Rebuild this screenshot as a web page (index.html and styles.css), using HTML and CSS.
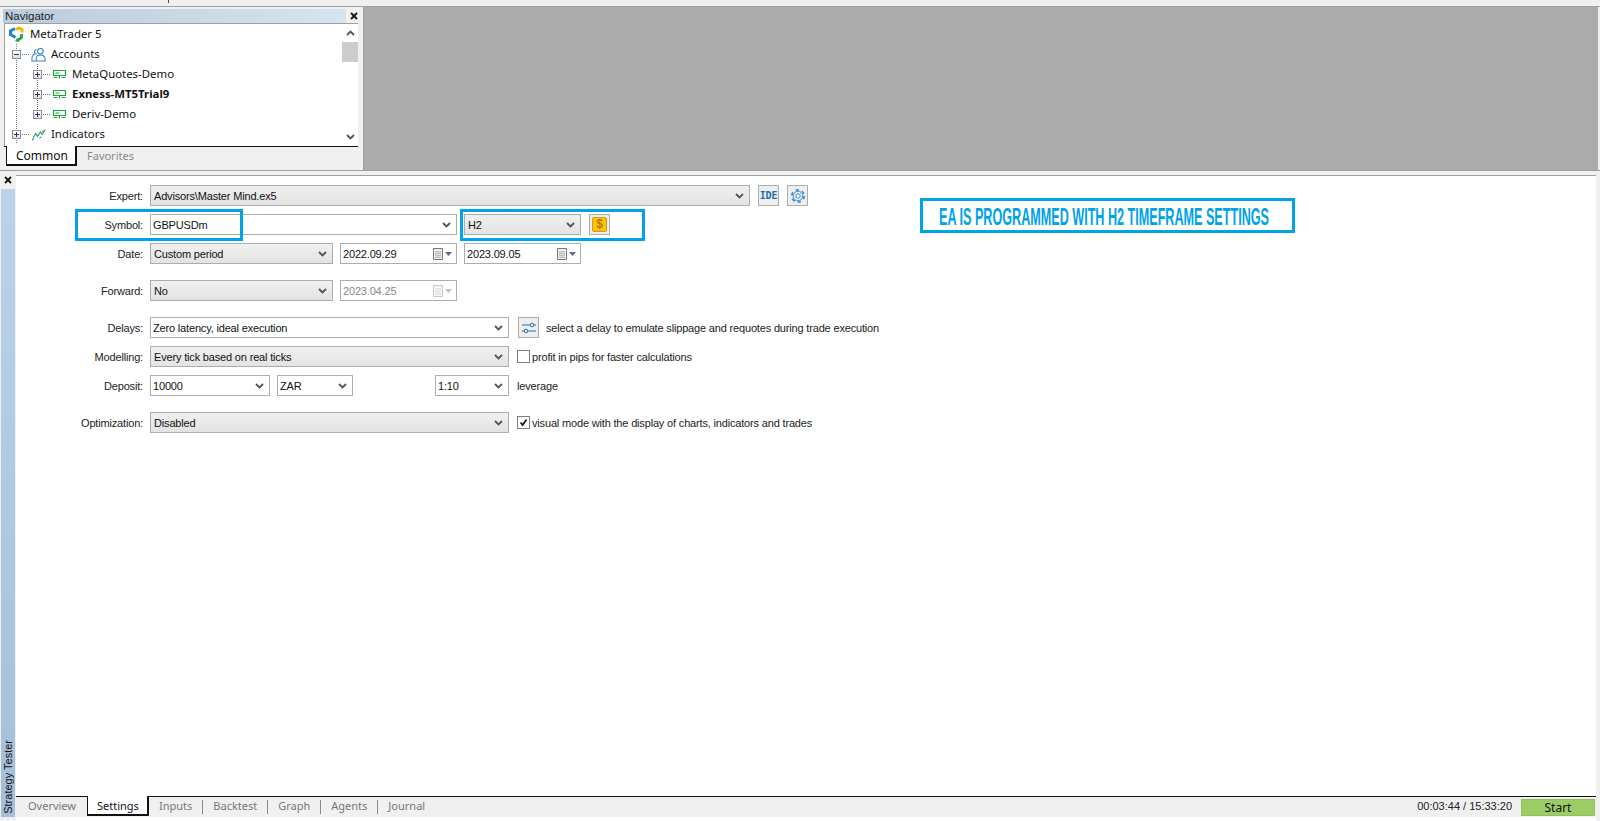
FILE: index.html
```html
<!DOCTYPE html>
<html lang="en">
<head>
<meta charset="utf-8">
<title>Strategy Tester</title>
<link rel="stylesheet" href="styles.css">
</head>
<body>
<header class="topbar"><span class="top-mark"></span></header>
<section class="upper">
  <aside class="navigator">
    <div class="nav-head">
      <div class="nav-title">Navigator</div>
      <svg class="close" viewBox="0 0 8 8"><path d="M1 1l6 6M7 1L1 7" /></svg>
    </div>
    <div class="nav-tree">
      <svg class="tree-lines" width="60" height="122"><path d="M16.500 20V120M37.500 40V91M22 30.500h7M43 50.500h7M43 70.500h7M43 90.500h7M22 110.500h7" /></svg>
      <div class="tree-body">
        <div class="node node-root">
          <svg class="logo" viewBox="0 0 16 16"><g fill="none" stroke-width="3"><path d="M7 2.500L2.500 5v3.500l5 3" stroke="#1b86d8"/><path d="M8 3.500l3-1.500 3 1.500v3" stroke="#f5b800"/><path d="M13.500 8v3.500l-4 3L8 13.500" stroke="#2da84a"/></g></svg>
          <span class="node-text">MetaTrader 5</span>
        </div>
        <div class="node node-l1">
          <span class="exp"></span>
          <svg class="ico" viewBox="0 0 16 16"><g fill="none" stroke="#2a7fc9" stroke-width="1.100"><circle cx="10" cy="4.500" r="3"/><path d="M5.500 15v-2.500c0-2.500 2-4 4.500-4s5 1.500 5 4V15z"/><path d="M5.600 2.600a2.500 2.500 0 0 0-.6 4.600C2.500 8 1 9.500 1 12v3h4"/></g></svg>
          <span class="node-text">Accounts</span>
        </div>
        <div class="node node-l2">
          <span class="exp plus"></span>
          <svg class="ico" viewBox="0 0 15 15"><path class="srv" d="M1.500 3.500h12v5h-12zM3.500 6h4M1.500 10.500h4M9.500 10.500h4M7.500 8.500v3"/></svg>
          <span class="node-text">MetaQuotes-Demo</span>
        </div>
        <div class="node node-l2 node-bold">
          <span class="exp plus"></span>
          <svg class="ico" viewBox="0 0 15 15"><path class="srv" d="M1.500 3.500h12v5h-12zM3.500 6h4M1.500 10.500h4M9.500 10.500h4M7.500 8.500v3"/></svg>
          <span class="node-text">Exness-MT5Trial9</span>
        </div>
        <div class="node node-l2">
          <span class="exp plus"></span>
          <svg class="ico" viewBox="0 0 15 15"><path class="srv" d="M1.500 3.500h12v5h-12zM3.500 6h4M1.500 10.500h4M9.500 10.500h4M7.500 8.500v3"/></svg>
          <span class="node-text">Deriv-Demo</span>
        </div>
        <div class="node node-l1">
          <span class="exp plus"></span>
          <svg class="ico" viewBox="0 0 16 16"><path d="M2 12l3-5 2 3 3-5 2 3 3-5" fill="none" stroke="#2fa24f" stroke-width="1.200"/><path d="M1 14l2-1.500M9 12l2-1.500M12 5l2-1" fill="none" stroke="#2a7fc9" stroke-width="1.200"/></svg>
          <span class="node-text">Indicators</span>
        </div>
      </div>
      <div class="scrollbar">
        <svg class="sb-arrow" viewBox="0 0 9 6"><path d="M1 5l3.500-3.500L8 5"/></svg>
        <div class="sb-track"><div class="sb-thumb"></div></div>
        <svg class="sb-arrow" viewBox="0 0 9 6"><path d="M1 1l3.500 3.500L8 1"/></svg>
      </div>
    </div>
    <div class="nav-tabs">
      <div class="nav-tab active">Common</div>
      <div class="nav-tab">Favorites</div>
    </div>
  </aside>
  <div class="workspace"></div>
</section>

<section class="tester">
  <div class="side">
    <svg class="close" viewBox="0 0 8 8"><path d="M1 1l6 6M7 1L1 7" /></svg>
    <div class="side-strip"><span>Strategy Tester</span></div>
  </div>
  <div class="main">
    <form class="form">
      <div class="row">
        <label class="lbl">Expert:</label>
        <div class="ctl sel w-expert"><span>Advisors\Master Mind.ex5</span><svg class="chev" viewBox="0 0 9 6"><path d="M1 1l3.500 3.500L8 1"/></svg></div>
        <div class="btn ide">IDE</div>
        <div class="btn"><svg class="btn-ico" viewBox="0 0 16 16"><circle cx="8" cy="8" r="6.200" fill="none" stroke="#3d8fd0" stroke-width="1.800" stroke-dasharray="3.300 3.200"/><circle cx="8" cy="8" r="4.800" fill="#dcecf8" stroke="#3d8fd0"/><circle cx="8" cy="8" r="2.200" fill="#fff" stroke="#3d8fd0"/></svg></div>
      </div>
      <div class="row">
        <label class="lbl">Symbol:</label>
        <div class="ctl inp w-symbol"><span>GBPUSDm</span><svg class="chev" viewBox="0 0 9 6"><path d="M1 1l3.500 3.500L8 1"/></svg></div>
        <div class="ctl sel w-tf"><span>H2</span><svg class="chev" viewBox="0 0 9 6"><path d="M1 1l3.500 3.500L8 1"/></svg></div>
        <div class="btn btn-tf"><span class="dollar">$</span></div>
      </div>
      <div class="row">
        <label class="lbl">Date:</label>
        <div class="ctl sel w-date"><span>Custom period</span><svg class="chev" viewBox="0 0 9 6"><path d="M1 1l3.500 3.500L8 1"/></svg></div>
        <div class="ctl inp w-cal"><span>2022.09.29</span><svg class="cal" viewBox="0 0 20 12"><path class="cal-b" d="M1.500 .5h9v11h-9z"/><path class="cal-g" d="M3 3.500h6M3 5.500h6M3 7.500h6M3 9.500h6M4 3v7M6 3v7M8 3v7"/><path class="cal-a" d="M13 4h7l-3.500 4z"/></svg></div>
        <div class="ctl inp w-tf"><span>2023.09.05</span><svg class="cal" viewBox="0 0 20 12"><path class="cal-b" d="M1.500 .5h9v11h-9z"/><path class="cal-g" d="M3 3.500h6M3 5.500h6M3 7.500h6M3 9.500h6M4 3v7M6 3v7M8 3v7"/><path class="cal-a" d="M13 4h7l-3.500 4z"/></svg></div>
      </div>
      <div class="row row-far">
        <label class="lbl">Forward:</label>
        <div class="ctl sel w-date"><span>No</span><svg class="chev" viewBox="0 0 9 6"><path d="M1 1l3.500 3.500L8 1"/></svg></div>
        <div class="ctl inp w-tf disabled"><span>2023.04.25</span><svg class="cal" viewBox="0 0 20 12"><path class="cal-b" d="M1.500 .5h9v11h-9z"/><path class="cal-g" d="M3 3.500h6M3 5.500h6M3 7.500h6M3 9.500h6M4 3v7M6 3v7M8 3v7"/><path class="cal-a" d="M13 4h7l-3.500 4z"/></svg></div>
      </div>
      <div class="row row-far">
        <label class="lbl">Delays:</label>
        <div class="ctl inp w-wide"><span>Zero latency, ideal execution</span><svg class="chev" viewBox="0 0 9 6"><path d="M1 1l3.500 3.500L8 1"/></svg></div>
        <div class="btn btn-delay"><svg class="btn-ico" viewBox="0 0 16 16"><path d="M1 5h8M13 5h2M1 11h2M7 11h8" fill="none" stroke="#2a6ea6"/><circle cx="11" cy="5" r="1.800" fill="none" stroke="#2a6ea6"/><circle cx="5" cy="11" r="1.800" fill="none" stroke="#2a6ea6"/></svg></div>
        <span class="note">select a delay to emulate slippage and requotes during trade execution</span>
      </div>
      <div class="row">
        <label class="lbl">Modelling:</label>
        <div class="ctl sel w-wide"><span>Every tick based on real ticks</span><svg class="chev" viewBox="0 0 9 6"><path d="M1 1l3.500 3.500L8 1"/></svg></div>
        <span class="check"></span>
        <span class="note">profit in pips for faster calculations</span>
      </div>
      <div class="row">
        <label class="lbl">Deposit:</label>
        <div class="ctl inp w-dep"><span>10000</span><svg class="chev" viewBox="0 0 9 6"><path d="M1 1l3.500 3.500L8 1"/></svg></div>
        <div class="ctl inp w-cur"><span>ZAR</span><svg class="chev" viewBox="0 0 9 6"><path d="M1 1l3.500 3.500L8 1"/></svg></div>
        <div class="ctl inp w-lev"><span>1:10</span><svg class="chev" viewBox="0 0 9 6"><path d="M1 1l3.500 3.500L8 1"/></svg></div>
        <span class="note note-lev">leverage</span>
      </div>
      <div class="row row-far">
        <label class="lbl">Optimization:</label>
        <div class="ctl sel w-wide"><span>Disabled</span><svg class="chev" viewBox="0 0 9 6"><path d="M1 1l3.500 3.500L8 1"/></svg></div>
        <span class="check"><svg viewBox="0 0 13 13"><path d="M3 6.500l2.500 3L10 3" fill="none" stroke="#111" stroke-width="2"/></svg></span>
        <span class="note">visual mode with the display of charts, indicators and trades</span>
      </div>
    </form>
    <div class="hl hl-symbol"></div>
    <div class="hl hl-tf"></div>
    <div class="hl hl-note"><span>EA IS PROGRAMMED WITH H2 TIMEFRAME SETTINGS</span></div>
    <footer class="tabbar">
      <div class="tab">Overview</div>
      <div class="tab active">Settings</div>
      <div class="tab sep">Inputs</div>
      <div class="tab sep">Backtest</div>
      <div class="tab sep">Graph</div>
      <div class="tab sep">Agents</div>
      <div class="tab">Journal</div>
      <div class="time">00:03:44 / 15:33:20</div>
      <div class="start">Start</div>
    </footer>
  </div>
</section>
</body>
</html>
```
FILE: styles.css
```css
* { box-sizing: border-box; }
html, body { height: 100%; }
body {
  margin: 0;
  width: 1600px;
  height: 821px;
  overflow: hidden;
  background: #f0f0f0;
  color: #111;
  font: 12px "Liberation Sans", Arial, sans-serif;
  display: flex;
  flex-direction: column;
}
.topbar { height: 7px; background: #f0f0f0; border-bottom: 1px solid #a0a0a0; padding-left: 168px; }
.top-mark { display: block; width: 1px; height: 3px; background: #7a3040; }
.upper { display: flex; height: 164px; border-bottom: 1px solid #a0a0a0; padding-right: 2px; }
.navigator { width: 364px; display: flex; flex-direction: column; background: #f0f0f0; padding: 2px 5px 0 3px; border-right: 1px solid #a0a0a0; }
.nav-head { display: flex; align-items: center; height: 14px; }
.nav-title { width: 343px; height: 14px; line-height: 14px; padding-left: 2px; font-size: 11.500px; color: #222; background: linear-gradient(90deg, #b9cbdc, #d6e4f2); }
.close { width: 8px; height: 8px; margin-left: 4px; fill: none; stroke: #111; stroke-width: 1.800; flex: none; }
.nav-tree { position: relative; display: flex; height: 123px; margin-left: 1px; background: #fff; border-top: 1px solid #a0a0a0; border-left: 1px solid #a0a0a0; }
.tree-lines { position: absolute; left: -5px; top: 0; fill: none; stroke: #777; stroke-dasharray: 1 1; }
.tree-body { position: relative; flex: 1; }
.node { display: flex; align-items: center; height: 20px; font-family: "Noto Sans", sans-serif; font-size: 11.400px; color: #111; }
.node-text { margin-bottom: 2px; }
.node-root { padding-left: 3px; gap: 6px; }
.logo { width: 16px; height: 16px; flex: none; }
.node-l1 { padding-left: 7px; }
.node-l2 { padding-left: 28px; }
.node-bold { font-weight: 700; }
.exp {
  width: 9px;
  height: 9px;
  flex: none;
  border: 1px solid #8a8f98;
  background: linear-gradient(#26306a, #26306a) center / 5px 1px no-repeat, linear-gradient(#fff, #dde0e6);
}
.exp.plus {
  background: linear-gradient(#26306a, #26306a) center / 5px 1px no-repeat, linear-gradient(#26306a, #26306a) center / 1px 5px no-repeat, linear-gradient(#fff, #dde0e6);
}
.ico { width: 15px; height: 15px; flex: none; }
.node-l1 .exp, .node-l2 .exp { margin-right: 10px; }
.node-l1 .ico, .node-l2 .ico { margin-right: 5px; }
.srv { fill: none; stroke: #17a83b; stroke-width: 1.200; }
.scrollbar { width: 16px; display: flex; flex-direction: column; align-items: center; background: #fff; }
.sb-arrow { width: 9px; height: 6px; margin: 6px 0 6px; fill: none; stroke: #555; stroke-width: 1.800; flex: none; }
.sb-track { flex: 1; width: 100%; }
.sb-thumb { height: 20px; background: #cdcdcd; }
.nav-tabs { display: flex; height: 21px; margin-left: 1px; border-top: 1px solid #111; padding-left: 2px; }
.nav-tab { height: 20px; line-height: 18px; padding: 0 10px; font-family: "Noto Sans", sans-serif; font-size: 11px; color: #888; }
.nav-tab.active { font-size: 12px; background: #fff; color: #111; width: 71px; border-left: 1px solid #111; border-right: 2px solid #111; border-bottom: 2px solid #111; margin-top: -1px; padding: 1px 0 0 9px; }
.workspace { flex: 1; background: #ababab; }
.tester { flex: 1; display: flex; min-height: 0; }
.side { width: 16px; flex: none; display: flex; flex-direction: column; align-items: center; padding-top: 5px; }
.side .close { margin: 0; }
.side-strip { flex: 1; width: 14px; margin-top: 5px; margin-bottom: 4px; background: linear-gradient(#bcd2ea, #a5bedb); display: flex; align-items: flex-end; justify-content: center; }
.side-strip span { writing-mode: vertical-rl; transform: rotate(180deg); font-size: 11px; line-height: 14px; color: #111; padding-top: 3px; }
.main { position: relative; flex: 1; display: flex; flex-direction: column; background: #fff; border-top: 1px solid #a0a0a0; margin: 4px 4px 0 0; }
.form { flex: 1; padding-top: 9px; display: flex; flex-direction: column; gap: 8px; letter-spacing: -.17px; }
.row { display: flex; align-items: center; height: 21px; gap: 7px; }
.row-far { margin-top: 8px; }
.lbl { width: 127px; text-align: right; color: #222; font-size: 11px; }
.ctl { height: 21px; border: 1px solid #adadad; display: flex; align-items: center; justify-content: space-between; padding: 0 3px; font-size: 11px; color: #111; flex: none; }
.sel { background: linear-gradient(#f0f0f0, #e3e3e3); }
.inp { background: #fff; padding-left: 2px; }
.chev { width: 9px; height: 6px; fill: none; stroke: #555; stroke-width: 1.800; flex: none; margin-right: 2px; }
.w-expert { width: 600px; }
.w-symbol { width: 307px; }
.w-tf { width: 117px; }
.w-date { width: 183px; }
.w-cal { width: 117px; }
.w-wide { width: 359px; }
.w-dep { width: 120px; }
.w-cur { width: 76px; }
.w-lev { width: 74px; margin-left: 75px; }
.disabled { color: #888; }
.disabled .cal { opacity: .4; }
.cal { width: 20px; height: 12px; flex: none; margin-right: 1px; }
.cal-b { fill: #f0f0f0; stroke: #777; }
.cal-g { stroke: #a8a8b0; fill: none; stroke-width: .6; }
.cal-a { fill: #5a6a96; }
.btn { width: 21px; height: 21px; flex: none; border: 1px solid #adadad; background: #eeeeee; display: flex; align-items: center; justify-content: center; margin-left: 1px; }
.btn-delay { margin-left: 2px; }
.btn-ico { width: 16px; height: 16px; }
.ide { font: 700 10px/1 "DejaVu Sans Mono", monospace; color: #1f6ea8; }
.dollar { width: 15px; height: 15px; background: #fdc500; border: 1px solid #d49a10; border-radius: 2px; font: 700 12px/13px "Liberation Sans", sans-serif; color: #b27a10; text-align: center; }
.note { font-size: 11px; color: #222; }
.check { width: 13px; height: 13px; border: 1px solid #7f7f7f; background: #fff; flex: none; margin: 0 -5px 0 1px; display: block; }
.check svg { display: block; width: 11px; height: 11px; }
.note-lev { margin-left: 1px; }
.hl { position: absolute; border: 3px solid #00a2e8; }
.hl-symbol { left: 59px; top: 33px; width: 168px; height: 32px; }
.hl-tf { left: 444px; top: 33px; width: 185px; height: 32px; }
.hl-note { left: 904px; top: 22px; width: 375px; height: 35px; padding-left: 16px; font: 700 24px/31px "Liberation Sans", sans-serif; color: #00a2e8; white-space: nowrap; }
.hl-note span { display: inline-block; transform: scaleX(.525); transform-origin: 0 50%; }
.tabbar { display: flex; align-items: flex-start; height: 21px; margin-bottom: 4px; background: #f0f0f0; border-top: 1px solid #111; font-family: "Noto Sans", sans-serif; padding-left: 2px; position: relative; font-size: 11px; color: #777; }
.tab { height: 19px; line-height: 18px; padding: 0 10px; flex: none; }
.tab:first-child { width: 69px; }
.tab.sep { border-right: 1px solid #888; height: 14px; margin-top: 3px; line-height: 12px; }
.tab.active { width: 62px; background: #fff; color: #111; border-left: 1px solid #111; border-right: 2px solid #111; border-bottom: 2px solid #111; margin: -1px 0 0 0; height: 20px; line-height: 19px; padding: 0 0 0 9px; }
.time { margin-left: auto; color: #222; margin-right: 9px; font: 11px/19px "Liberation Sans", sans-serif; }
.start { width: 74px; height: 17px; margin-top: 2px; margin-right: 1px; background: #9ccc65; border: 1px solid #8fc05a; text-align: center; line-height: 15px; color: #111; font-size: 12px; }
```
